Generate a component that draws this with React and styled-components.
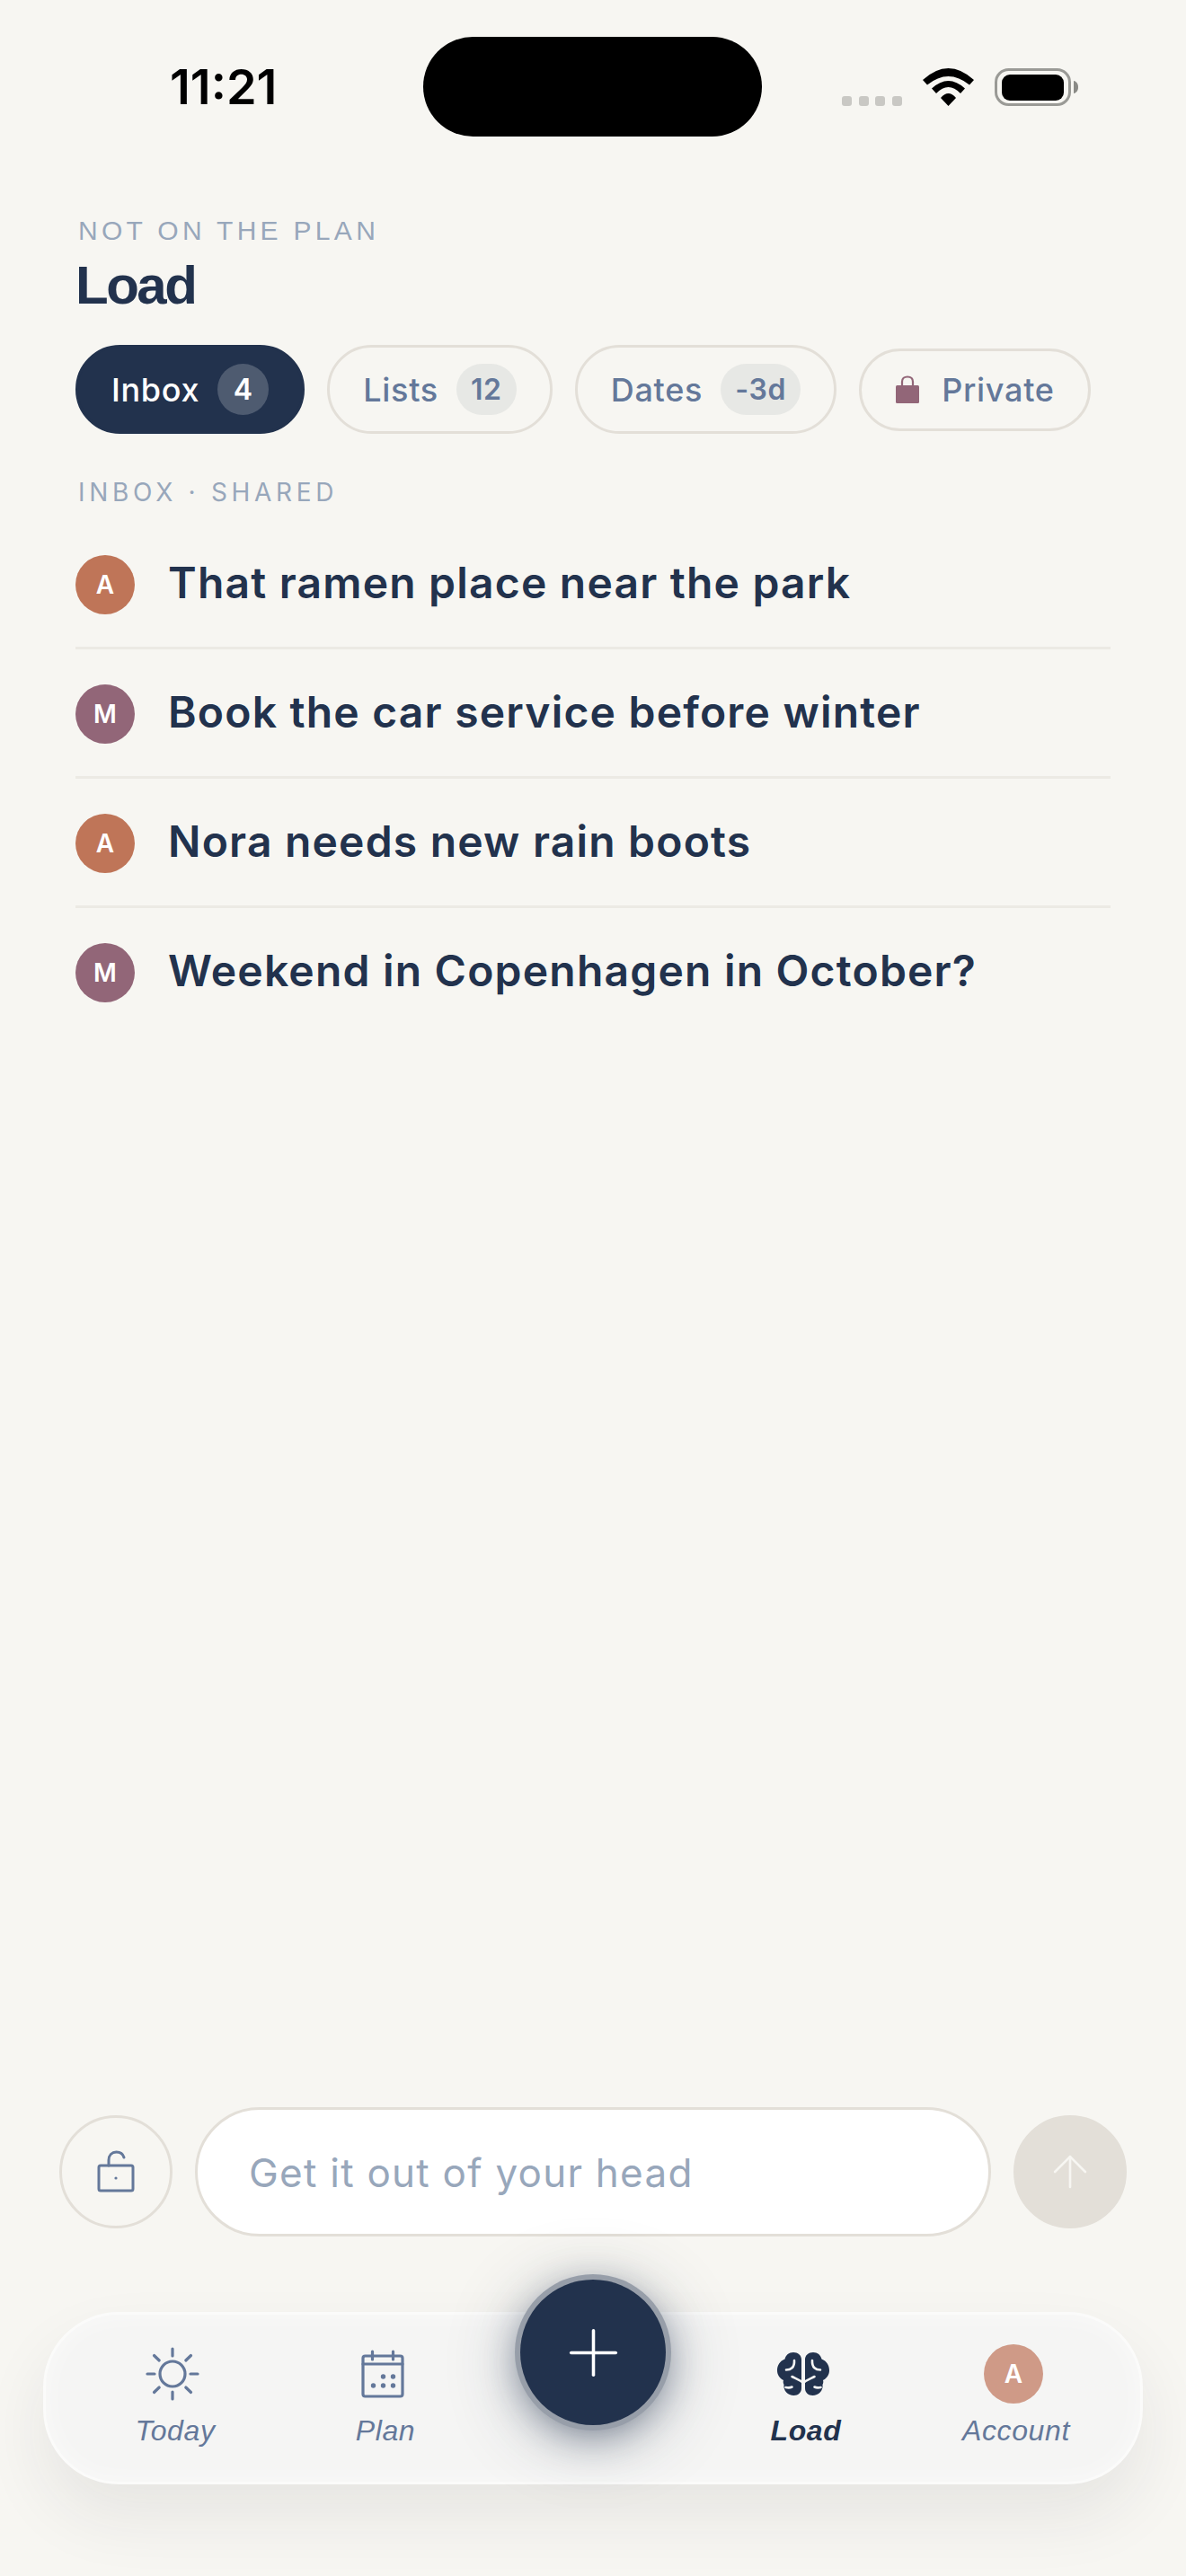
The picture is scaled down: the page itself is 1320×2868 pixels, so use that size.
import React from "react";
import styled, { createGlobalStyle } from "styled-components";
import { Plus, ArrowUp } from "lucide-react";

const NAVY = "#22324d";
const SLATE = "#64789a";
const MUTED = "#98a7bb";
const LINE = "#e3dfd8";
const BODY = `"Inter", "Liberation Sans", sans-serif`;
const HELV = `"Liberation Sans", Arial, sans-serif`;

const Global = createGlobalStyle`
  html, body { margin: 0; padding: 0; background: #f7f6f2; }
  * { box-sizing: border-box; }
  input::placeholder { color: ${MUTED}; opacity: 1; }
`;

const Page = styled.div`
  width: 1320px;
  height: 2868px;
  display: flex;
  flex-direction: column;
  background: #f7f6f2;
  font-family: ${BODY};
  overflow: hidden;
`;

const StatusBar = styled.div`
  display: flex;
  align-items: center;
  padding: 41px 0 0 189px;
`;
const Time = styled.div`
  width: 120px;
  font: 600 54px/60px ${BODY};
  color: #000;
  white-space: nowrap;
`;
const Island = styled.div`
  width: 377px;
  height: 111px;
  margin-left: 162px;
  border-radius: 56px;
  background: #000;
`;
const StatusIcons = styled.div`
  margin-left: 89px;
  display: flex;
  align-items: flex-end;
  height: 42px;
`;
const Dots = styled.div`
  display: flex;
  gap: 7.5px;
  margin-right: 23px;
`;
const Dot = styled.span`
  width: 11px;
  height: 11px;
  border-radius: 3px;
  background: #c9c8c4;
`;
const Battery = styled.svg`
  margin-left: 23px;
  display: block;
`;
const WifiIcon = styled.svg`
  display: block;
`;

const Main = styled.main`
  flex: 1;
  min-height: 0;
  padding: 0 84px;
  display: flex;
  flex-direction: column;
`;
const Eyebrow = styled.div`
  margin: 88px 0 0 3px;
  font: 400 30px/34px ${HELV};
  letter-spacing: 4.3px;
  color: ${MUTED};
`;
const Title = styled.h1`
  margin: 11px 0 0;
  font: 700 60px/66px ${HELV};
  letter-spacing: -2.5px;
  color: ${NAVY};
`;
const Pills = styled.div`
  display: flex;
  align-items: center;
  gap: 25px;
  margin-top: 33px;
`;
const Pill = styled.div`
  display: flex;
  align-items: center;
  gap: 20px;
  padding: 18px 37px;
  border: 3px solid ${(p) => (p.$active ? NAVY : LINE)};
  border-radius: 60px;
  background: ${(p) => (p.$active ? NAVY : "transparent")};
  color: ${(p) => (p.$active ? "#fff" : SLATE)};
  font-size: 36px;
  line-height: 50px;
  font-weight: 500;
  letter-spacing: 0.7px;
`;
const Badge = styled.span`
  min-width: 57px;
  height: 57px;
  padding: 0 16px;
  display: flex;
  align-items: center;
  justify-content: center;
  border-radius: 29px;
  background: ${(p) => (p.$active ? "rgba(255,255,255,.2)" : "rgba(34,50,77,.07)")};
  font-size: 32px;
  font-weight: 600;
`;
const BagBox = styled.span`
  display: flex;
  margin-right: 4px;
`;
const SectionLabel = styled.div`
  margin: 47px 0 0 3px;
  font-size: 28px;
  line-height: 36px;
  letter-spacing: 4.7px;
  color: ${MUTED};
`;
const List = styled.div`
  margin-top: 13px;
  display: flex;
  flex-direction: column;
`;
const Row = styled.div`
  display: flex;
  align-items: center;
  gap: 37px;
  padding: 39px 0 36px;
  border-bottom: 3px solid ${(p) => (p.$last ? "transparent" : "#eceae4")};
`;
const Avatar = styled.div`
  width: 66px;
  height: 66px;
  flex: none;
  border-radius: 50%;
  display: flex;
  align-items: center;
  justify-content: center;
  background: ${(p) => p.$color};
  color: #fff;
  font-size: 28px;
  font-weight: 600;
`;
const RowText = styled.div`
  padding-bottom: 4px;
  font-size: 48px;
  line-height: 60px;
  font-weight: 600;
  letter-spacing: 1.2px;
  color: ${NAVY};
`;

const Composer = styled.div`
  display: flex;
  align-items: center;
  gap: 25px;
  padding: 0 66px;
  margin-bottom: 84px;
`;
const RoundButton = styled.button`
  width: 126px;
  height: 126px;
  flex: none;
  padding: 0;
  border-radius: 50%;
  display: flex;
  align-items: center;
  justify-content: center;
  border: 3px solid ${LINE};
  background: ${(p) => (p.$filled ? LINE : "transparent")};
  color: ${(p) => (p.$filled ? "#f7f6f2" : SLATE)};
`;
const Field = styled.input`
  flex: 1;
  min-width: 0;
  height: 144px;
  padding: 2px 57px 0;
  border: 3px solid ${LINE};
  border-radius: 72px;
  background: #fff;
  outline: none;
  font-family: ${BODY};
  font-size: 44px;
  letter-spacing: 1.25px;
`;

const Nav = styled.nav`
  position: relative;
  margin: 0 48px 102px;
  height: 192px;
  padding: 33px 24px 0;
  display: grid;
  grid-template-columns: repeat(5, 1fr);
  border: 3px solid #fbfbfa;
  border-radius: 84px;
  background: #f5f5f4;
  box-shadow: 0 36px 72px rgba(34, 40, 50, 0.08), inset 0 0 30px rgba(255, 255, 255, 0.5);
`;
const NavItem = styled.div`
  display: flex;
  flex-direction: column;
  align-items: center;
  color: ${(p) => (p.$active ? NAVY : SLATE)};
`;
const NavIcon = styled.div`
  height: 66px;
  display: flex;
  align-items: center;
  justify-content: center;
`;
const NavLabel = styled.div`
  margin-top: 8px;
  font: italic ${(p) => (p.$active ? 700 : 400)} 32px/44px ${HELV};
  letter-spacing: 0.6px;
  transform: translateX(3px);
`;
const AccountAvatar = styled(Avatar)`
  background: #cf9a87;
`;
const Fab = styled.button`
  position: absolute;
  left: 50%;
  top: -39px;
  width: 162px;
  height: 162px;
  margin-left: -81px;
  padding: 0;
  border: none;
  border-radius: 50%;
  background: ${NAVY};
  color: #fff;
  display: flex;
  align-items: center;
  justify-content: center;
  box-shadow: 0 0 0 6px #979ea9, 0 10px 40px rgba(34, 50, 77, 0.5), 0 12px 84px rgba(34, 50, 77, 0.3);
`;

const LockOpenIcon = () => (
  <svg width="44" height="48" viewBox="0 0 44 48" fill="none" stroke="currentColor" strokeWidth="3" strokeLinecap="round" strokeLinejoin="round">
    <rect x="3" y="17" width="38" height="28" rx="2" />
    <path d="M14 17 V11 C14 5.500 17.500 2 22.500 2 C27 2 30 4.500 31 8" />
    <circle cx="22" cy="31" r="1.600" fill="currentColor" stroke="none" />
  </svg>
);
const BagIcon = () => (
  <svg width="28" height="32" viewBox="0 0 28 32">
    <path d="M8 12 V7 C8 3.500 10.500 1.500 14 1.500 C17.500 1.500 20 3.500 20 7 V12" fill="none" stroke="#926678" strokeWidth="2.200" />
    <rect x="1" y="11" width="26" height="20" rx="1.500" fill="#926678" />
  </svg>
);
const SunIcon = () => (
  <svg width="60" height="60" viewBox="0 0 60 60" fill="none" stroke="currentColor" strokeWidth="3.200" strokeLinecap="round">
    <circle cx="30" cy="30" r="14" />
    <path d="M30 2 V10 M30 50 V58 M2 30 H10 M50 30 H58 M9.500 9.500 L15.200 15 M44.800 45 L50.500 50.500 M9.500 50.500 L15.200 45 M44.800 15 L50.500 9.500" />
  </svg>
);
const CalendarIcon = () => (
  <svg width="50" height="54" viewBox="0 0 50 54" fill="none" stroke="currentColor" strokeWidth="3.200" strokeLinecap="round" strokeLinejoin="round">
    <rect x="3" y="7" width="44" height="45" rx="2.500" />
    <path d="M3 16 H47 M13.500 2 V11 M36.500 2 V11" />
    <g fill="currentColor" stroke="none">
      <circle cx="25.500" cy="30" r="2.700" />
      <circle cx="36.500" cy="30" r="2.700" />
      <circle cx="14.500" cy="40" r="2.700" />
      <circle cx="25.500" cy="40" r="2.700" />
      <circle cx="36.500" cy="40" r="2.700" />
    </g>
  </svg>
);
const BrainHalf = () => (
  <>
    <path
      fill={NAVY}
      d="M27 8 C27 3 23 0 18 0 C13 0 9.500 3 8.500 7.500 C3 9.500 0 14.500 0 20 C0 25.500 3 29 7 31 C6.500 32.500 6.500 34 7.500 36 C6.500 42.500 12 48 18.500 48 C23.500 48 27 44.500 27 40 Z"
    />
    <path
      fill="none"
      stroke="#f5f5f4"
      strokeWidth="2.600"
      strokeLinecap="round"
      d="M10 19.500 C15 19.500 19.500 17 19 9 M16.500 27 C20 29 25 30.500 29 34 M9.500 39 C12 39.500 14.500 39.500 16.500 38.500"
    />
  </>
);
const BrainIcon = () => (
  <svg width="58" height="48" viewBox="0 0 58 48">
    <BrainHalf />
    <g transform="matrix(-1 0 0 1 58 0)">
      <BrainHalf />
    </g>
  </svg>
);

const items = [
  ["A", "#bf7558", "That ramen place near the park"],
  ["M", "#926678", "Book the car service before winter"],
  ["A", "#bf7558", "Nora needs new rain boots"],
  ["M", "#926678", "Weekend in Copenhagen in October?"],
];

export default function App() {
  return (
    <Page>
      <Global />
      <StatusBar>
        <Time>11:21</Time>
        <Island />
        <StatusIcons>
          <Dots>
            <Dot />
            <Dot />
            <Dot />
            <Dot />
          </Dots>
          <WifiIcon width="57" height="42" viewBox="0 0 57 42">
            <path d="M0 13 Q28.500 -13 57 13 L52 18.500 Q28.500 -0.500 5 18.500 Z" />
            <path d="M10 22.500 Q28.500 5.500 47 22.500 L42 28 Q28.500 14 15 28 Z" />
            <path d="M20 33 Q28.500 23 37 33 L28.500 42 Z" />
          </WifiIcon>
          <Battery width="93" height="42" viewBox="0 0 93 42">
            <rect x="1.500" y="1.500" width="82" height="39" rx="14" fill="none" stroke="#9a9a96" strokeWidth="3" />
            <rect x="8" y="7" width="69" height="29" rx="9" fill="#000" />
            <path d="M88 14 C91 14.500 93 17 93 21 C93 25 91 27.500 88 28 Z" fill="#8a8a86" />
          </Battery>
        </StatusIcons>
      </StatusBar>

      <Main>
        <Eyebrow>NOT ON THE PLAN</Eyebrow>
        <Title>Load</Title>
        <Pills>
          <Pill $active>
            Inbox
            <Badge $active>4</Badge>
          </Pill>
          <Pill>
            Lists
            <Badge>12</Badge>
          </Pill>
          <Pill>
            Dates
            <Badge>-3d</Badge>
          </Pill>
          <Pill>
            <BagBox>
              <BagIcon />
            </BagBox>
            Private
          </Pill>
        </Pills>
        <SectionLabel>INBOX · SHARED</SectionLabel>
        <List>
          {items.map(([who, color, text], i) => (
            <Row key={text} $last={i === items.length - 1}>
              <Avatar $color={color}>{who}</Avatar>
              <RowText>{text}</RowText>
            </Row>
          ))}
        </List>
      </Main>

      <Composer>
        <RoundButton>
          <LockOpenIcon />
        </RoundButton>
        <Field placeholder="Get it out of your head" />
        <RoundButton $filled>
          <ArrowUp size={58} strokeWidth={1.1} />
        </RoundButton>
      </Composer>

      <Nav>
        <NavItem>
          <NavIcon>
            <SunIcon />
          </NavIcon>
          <NavLabel>Today</NavLabel>
        </NavItem>
        <NavItem>
          <NavIcon>
            <CalendarIcon />
          </NavIcon>
          <NavLabel>Plan</NavLabel>
        </NavItem>
        <div />
        <NavItem $active>
          <NavIcon>
            <BrainIcon />
          </NavIcon>
          <NavLabel $active>Load</NavLabel>
        </NavItem>
        <NavItem>
          <NavIcon>
            <AccountAvatar>A</AccountAvatar>
          </NavIcon>
          <NavLabel>Account</NavLabel>
        </NavItem>
        <Fab>
          <Plus size={85} strokeWidth={1} />
        </Fab>
      </Nav>
    </Page>
  );
}
